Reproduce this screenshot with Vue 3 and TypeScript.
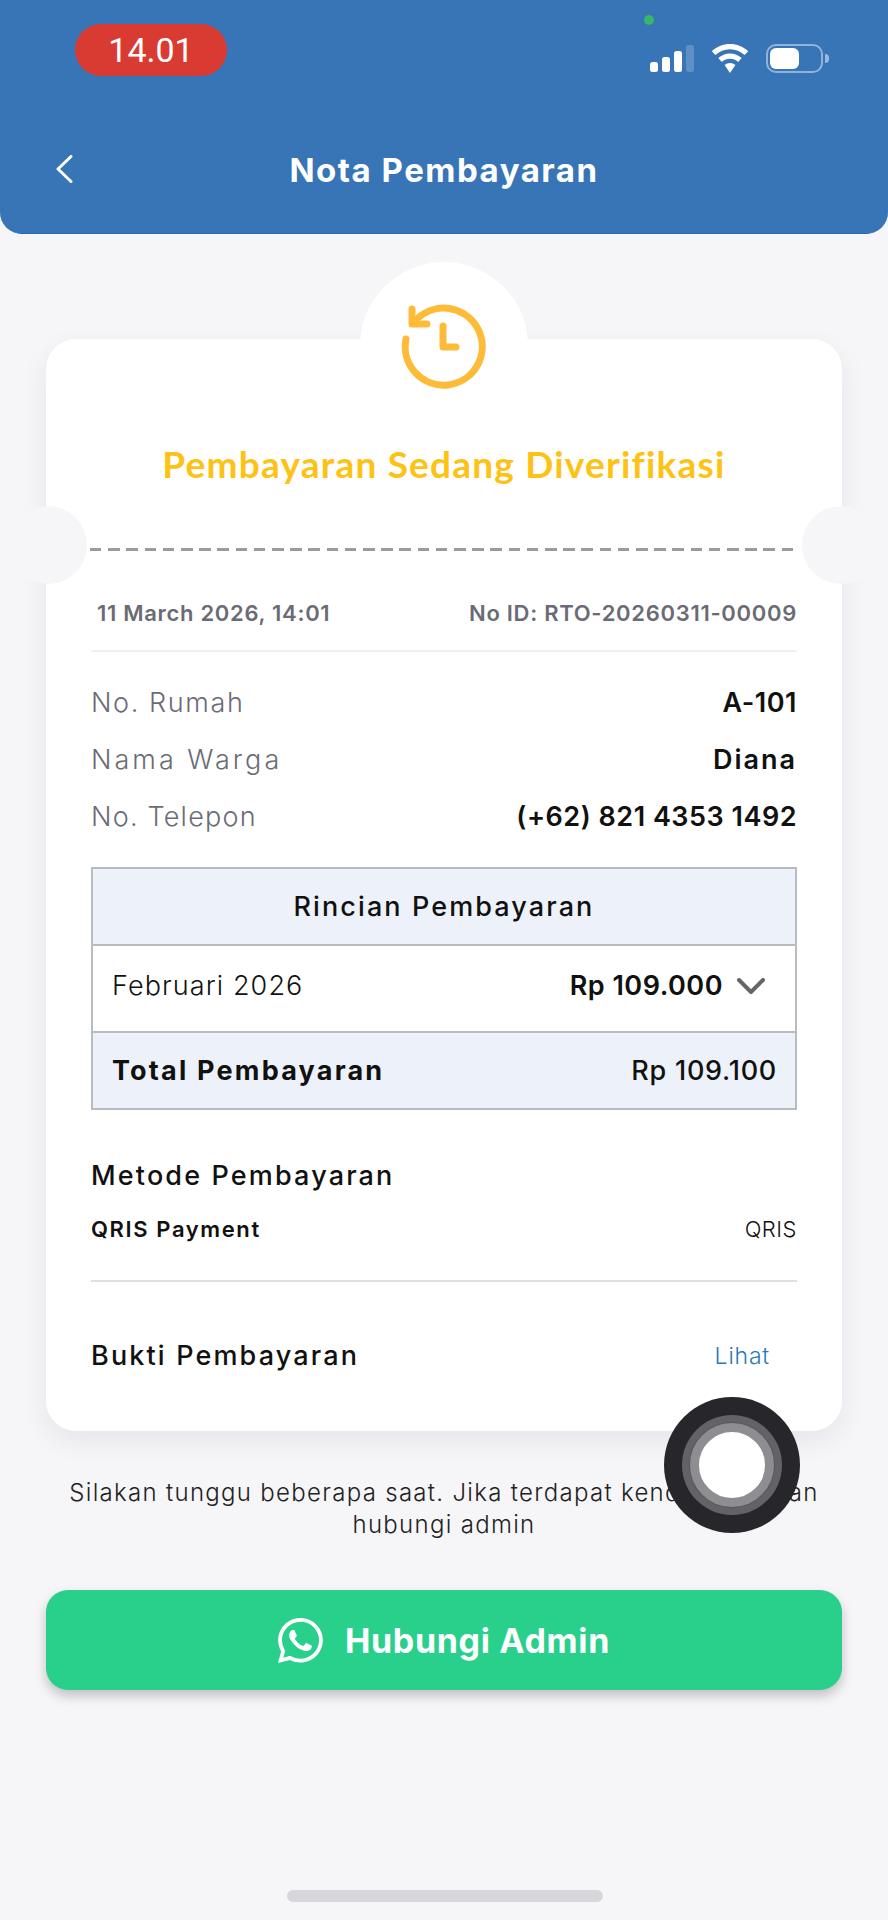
<script setup lang="ts">
interface InfoRow {
  label: string
  value: string
}

const infoRows: InfoRow[] = [
  { label: 'No. Rumah', value: 'A-101' },
  { label: 'Nama Warga', value: 'Diana' },
  { label: 'No. Telepon', value: '(+62) 821 4353 1492' },
]
</script>

<template>
  <div class="page">
    <header class="header">
      <div class="status-bar">
        <div class="time-pill">14.01</div>
        <div class="status-icons">
          <div class="signal">
            <span class="bar b1"></span>
            <span class="bar b2"></span>
            <span class="bar b3"></span>
            <span class="bar b4"></span>
          </div>
          <svg class="wifi" viewBox="0 0 38 29" width="38" height="29">
            <path d="M19 0C12 0 5.600 2.700 .8 7.200l3.600 3.900C8.200 7.500 13.300 5.300 19 5.300s10.800 2.200 14.600 5.800l3.600-3.900C32.400 2.700 26 0 19 0z" fill="#fff" />
            <path d="M19 9.500c-4.500 0-8.600 1.700-11.700 4.600l3.600 3.900c2.100-2 5-3.200 8.100-3.200s6 1.200 8.100 3.200l3.600-3.900C27.600 11.200 23.500 9.500 19 9.500z" fill="#fff" />
            <path d="M19 19c-2.100 0-4 .8-5.400 2.100L19 29l5.400-7.900C23 19.800 21.100 19 19 19z" fill="#fff" />
          </svg>
          <div class="battery">
            <span class="battery-fill"></span>
          </div>
          <span class="battery-tip"></span>
        </div>
        <span class="green-dot"></span>
      </div>
      <div class="nav-bar">
        <svg class="back" viewBox="0 0 18 28" width="18" height="28">
          <path d="M16 1.500 3 14l13 12.500" fill="none" stroke="#fff" stroke-width="3" stroke-linecap="round" stroke-linejoin="round" />
        </svg>
        <h1 class="nav-title">Nota Pembayaran</h1>
      </div>
    </header>

    <main class="content">
      <section class="card">
        <div class="bump"></div>
        <svg class="status-icon" viewBox="394 296 100 100" width="100" height="100">
          <g fill="none" stroke="#fdbb38" stroke-width="7" stroke-linecap="round" stroke-linejoin="round">
            <path d="M406 339A38.500 38.500 0 1 0 418 318" />
            <path d="M412 309v15h15" />
            <path d="M443 326v21h13" />
          </g>
        </svg>
        <h2 class="status-title">Pembayaran Sedang Diverifikasi</h2>

        <div class="tear">
          <span class="notch left"></span>
          <span class="dash"></span>
          <span class="notch right"></span>
        </div>

        <div class="meta">
          <span>11 March 2026, 14:01</span>
          <span>No ID: RTO-20260311-00009</span>
        </div>

        <div class="info">
          <div v-for="row in infoRows" :key="row.label" class="info-row">
            <span class="info-label">{{ row.label }}</span>
            <span class="info-value">{{ row.value }}</span>
          </div>
        </div>

        <div class="detail">
          <div class="detail-head">Rincian Pembayaran</div>
          <div class="detail-row">
            <span class="month">Februari 2026</span>
            <span class="amount">Rp 109.000</span>
            <svg class="chevron" viewBox="0 0 28 16" width="28" height="16">
              <path d="M2 2l12 12L26 2" fill="none" stroke="#666669" stroke-width="4" stroke-linecap="round" stroke-linejoin="round" />
            </svg>
          </div>
          <div class="detail-total">
            <span class="total-label">Total Pembayaran</span>
            <span class="total-value">Rp 109.100</span>
          </div>
        </div>

        <h3 class="method-title">Metode Pembayaran</h3>
        <div class="method-row">
          <span class="method-name">QRIS Payment</span>
          <span class="method-code">QRIS</span>
        </div>

        <div class="proof">
          <span class="proof-title">Bukti Pembayaran</span>
          <span class="proof-link">Lihat</span>
        </div>
      </section>

      <p class="notice">Silakan tunggu beberapa saat. Jika terdapat kendala, silakan hubungi admin</p>

      <button class="wa-button" type="button">
        <svg class="wa-icon" viewBox="0 0 16 16" width="45" height="45">
          <path fill="#fff" d="M13.601 2.326A7.854 7.854 0 0 0 7.994 0C3.627 0 .068 3.558.064 7.926c0 1.399.366 2.760 1.057 3.965L0 16l4.204-1.102a7.933 7.933 0 0 0 3.790.965h.004c4.368 0 7.926-3.558 7.930-7.930A7.898 7.898 0 0 0 13.600 2.326zM7.994 14.521a6.573 6.573 0 0 1-3.356-.920l-.240-.144-2.494.654.666-2.433-.156-.251a6.560 6.560 0 0 1-1.007-3.505c0-3.626 2.957-6.584 6.591-6.584a6.560 6.560 0 0 1 4.660 1.931 6.557 6.557 0 0 1 1.928 4.660c-.004 3.639-2.961 6.592-6.592 6.592zm3.615-4.934c-.197-.099-1.170-.578-1.353-.646-.182-.065-.315-.099-.445.099-.133.197-.513.646-.627.775-.114.133-.232.148-.430.050-.197-.100-.836-.308-1.592-.985-.590-.525-.985-1.175-1.103-1.372-.114-.198-.011-.304.088-.403.087-.088.197-.232.296-.346.100-.114.133-.198.198-.330.065-.134.034-.248-.015-.347-.050-.099-.445-1.076-.612-1.470-.160-.389-.323-.335-.445-.340-.114-.007-.247-.007-.380-.007a.729.729 0 0 0-.529.247c-.182.198-.691.677-.691 1.654 0 .977.710 1.916.810 2.049.098.133 1.394 2.132 3.383 2.992.470.205.840.326 1.129.418.475.152.904.129 1.246.080.380-.058 1.171-.480 1.338-.943.164-.464.164-.860.114-.943-.049-.084-.182-.133-.380-.232z" />
        </svg>
        <span>Hubungi Admin</span>
      </button>
    </main>

    <div class="home-indicator"></div>

    <div class="assistive">
      <div class="ring-outer">
        <div class="ring-mid">
          <div class="ring-core"></div>
        </div>
      </div>
    </div>
  </div>
</template>

<style>
html,
body {
  margin: 0;
  background: #f6f5f8;
}
</style>

<style scoped>
.page {
  position: relative;
  width: 888px;
  height: 1920px;
  overflow: hidden;
  background: #f6f5f8;
  font-family: Inter, 'Open Sans', sans-serif;
  color: #111;
  display: flex;
  flex-direction: column;
}

.header {
  height: 234px;
  box-sizing: border-box;
  background: #3775b6;
  border-radius: 0 0 22px 22px;
  border-bottom: 1px solid #1f6fb8;
  flex-shrink: 0;
}

.status-bar {
  position: relative;
  height: 130px;
  padding: 24px 59px 0 75px;
  box-sizing: border-box;
  display: flex;
  justify-content: space-between;
  align-items: flex-start;
}

.time-pill {
  width: 152px;
  height: 52px;
  border-radius: 26px;
  background: #d93b32;
  color: #fff;
  font-family: Roboto, sans-serif;
  font-size: 34px;
  line-height: 52px;
  text-align: center;
}

.status-icons {
  display: flex;
  align-items: center;
  height: 29px;
  margin-top: 20px;
}

.signal {
  display: flex;
  align-items: flex-end;
  gap: 4px;
  height: 27px;
  margin-right: 17px;
}

.bar {
  width: 8px;
  border-radius: 2.500px;
  background: #fff;
}

.b1 {
  height: 10px;
}

.b2 {
  height: 15px;
}

.b3 {
  height: 21px;
}

.b4 {
  height: 27px;
  background: rgba(255, 255, 255, 0.2);
}

.battery {
  width: 57px;
  height: 29px;
  box-sizing: border-box;
  margin-left: 17px;
  padding: 2px;
  border: 2px solid rgba(255, 255, 255, 0.45);
  border-radius: 10px;
}

.battery-fill {
  display: block;
  width: 29px;
  height: 100%;
  border-radius: 6px;
  background: #fff;
}

.battery-tip {
  width: 4px;
  height: 9px;
  margin-left: 2px;
  border-radius: 0 5px 5px 0;
  background: rgba(255, 255, 255, 0.5);
}

.green-dot {
  position: absolute;
  left: 644px;
  top: 15px;
  width: 10px;
  height: 10px;
  border-radius: 50%;
  background: #34b86a;
}

.nav-bar {
  position: relative;
  height: 80px;
  display: flex;
  align-items: center;
  justify-content: center;
}

.back {
  position: absolute;
  left: 55px;
  top: 25px;
}

.nav-title {
  margin: 0;
  color: #fff;
  font-size: 33px;
  font-weight: 700;
  letter-spacing: 1.500px;
}

.content {
  padding: 105px 46px 0;
  display: flex;
  flex-direction: column;
}

.card {
  position: relative;
  height: 1092px;
  box-sizing: border-box;
  padding: 0 45px;
  background: #fff;
  border-radius: 30px;
  box-shadow: 0 10px 28px rgba(20, 20, 40, 0.07);
  display: flex;
  flex-direction: column;
}

.bump {
  position: absolute;
  left: 314px;
  top: -77px;
  width: 168px;
  height: 168px;
  border-radius: 50%;
  background: #fff;
}

.status-icon {
  position: absolute;
  left: 348px;
  top: -43px;
}

.status-title {
  position: relative;
  margin: 100px 0 0;
  height: 50px;
  text-align: center;
  color: #fec214;
  font-family: Lato, sans-serif;
  font-size: 37px;
  font-weight: 700;
  line-height: 50px;
  letter-spacing: 1.200px;
}

.tear {
  position: relative;
  height: 3px;
  margin-top: 59px;
}

.dash {
  display: block;
  height: 3px;
  margin: 0 3px 0 -1px;
  background: repeating-linear-gradient(90deg, #9b9a9f 0 11.500px, transparent 11.500px 18.200px);
}

.notch {
  position: absolute;
  top: -42px;
  width: 78px;
  height: 78px;
  border-radius: 50%;
  background: #f6f5f8;
}

.notch.left {
  left: -82px;
}

.notch.right {
  right: -83px;
}

.meta {
  margin-top: 49px;
  padding: 0 0 24px 6px;
  display: flex;
  justify-content: space-between;
  color: #6b6b76;
  font-size: 22px;
  font-weight: 600;
  line-height: 26px;
  letter-spacing: 0.700px;
  border-bottom: 2px solid #f0f0f3;
}

.info {
  margin-top: 35px;
  display: flex;
  flex-direction: column;
  gap: 25px;
}

.info-row {
  display: flex;
  justify-content: space-between;
  font-size: 27px;
  line-height: 32px;
}

.info-label {
  color: #6b6b76;
  font-weight: 300;
  letter-spacing: 1.600px;
}

.info-row:nth-child(2) .info-label {
  letter-spacing: 3px;
}

.info-row:nth-child(3) .info-label {
  letter-spacing: 1.200px;
}

.info-value {
  font-weight: 600;
  letter-spacing: 0.500px;
}

.info-row:nth-child(2) .info-value {
  letter-spacing: 2px;
}

.detail {
  margin-top: 34px;
  border: 2px solid #b8bbc0;
  font-size: 27px;
}

.detail-head {
  height: 77px;
  box-sizing: border-box;
  border-bottom: 2px solid #b8bbc0;
  background: #edf2fa;
  text-align: center;
  line-height: 75px;
  font-weight: 500;
  letter-spacing: 2.100px;
}

.detail-row {
  height: 87px;
  box-sizing: border-box;
  padding: 0 30px 6px 19px;
  border-bottom: 2px solid #b8bbc0;
  display: flex;
  align-items: center;
}

.month {
  flex: 1;
  font-weight: 300;
  letter-spacing: 1.100px;
}

.amount {
  font-weight: 600;
  margin-right: 14px;
  letter-spacing: 0.500px;
}

.detail-total {
  height: 75px;
  box-sizing: border-box;
  padding: 0 18px 0 19px;
  background: #edf2fa;
  display: flex;
  justify-content: space-between;
  align-items: center;
}

.total-label {
  font-weight: 700;
  letter-spacing: 2.200px;
}

.total-value {
  font-weight: 500;
  letter-spacing: 0.750px;
}

.method-title {
  margin: 49px 0 0;
  font-size: 27px;
  font-weight: 500;
  line-height: 34px;
  letter-spacing: 2.150px;
}

.method-row {
  margin-top: 22px;
  padding-bottom: 37px;
  border-bottom: 2px solid #e0e0e4;
  display: flex;
  justify-content: space-between;
  align-items: center;
  font-size: 22px;
  line-height: 28px;
}

.method-name {
  font-weight: 600;
  letter-spacing: 1.600px;
}

.method-code {
  font-weight: 300;
  letter-spacing: 0.500px;
}

.proof {
  margin-top: 57px;
  padding-right: 27px;
  display: flex;
  justify-content: space-between;
  align-items: center;
  line-height: 34px;
}

.proof-title {
  font-size: 27px;
  font-weight: 500;
  letter-spacing: 2.150px;
}

.proof-link {
  font-size: 23px;
  font-weight: 300;
  letter-spacing: 0.800px;
  color: #2e77b8;
}

.notice {
  margin: 46px 0 0;
  text-align: center;
  color: #222;
  font-size: 24px;
  font-weight: 300;
  line-height: 32px;
  letter-spacing: 1.300px;
}

.wa-button {
  height: 100px;
  margin-top: 49px;
  border: 0;
  border-radius: 22px;
  background: #28d08c;
  box-shadow: 0 6px 12px rgba(0, 0, 0, 0.22);
  color: #fff;
  font-family: inherit;
  font-size: 34px;
  font-weight: 700;
  letter-spacing: 0.650px;
  display: flex;
  align-items: center;
  justify-content: center;
  gap: 22px;
}

.wa-icon {
  flex-shrink: 0;
}

.home-indicator {
  position: absolute;
  left: 287px;
  bottom: 18px;
  width: 316px;
  height: 12px;
  border-radius: 6px;
  background: #d7d6da;
}

.assistive {
  position: absolute;
  left: 664px;
  top: 1397px;
}

.ring-outer {
  width: 136px;
  height: 136px;
  border-radius: 50%;
  background: #27262b;
  display: flex;
  align-items: center;
  justify-content: center;
}

.ring-mid {
  width: 100px;
  height: 100px;
  border-radius: 50%;
  background: #636266;
  display: flex;
  align-items: center;
  justify-content: center;
}

.ring-core {
  width: 66px;
  height: 66px;
  border-radius: 50%;
  background: #fff;
  border: 9px solid #8e8d92;
  box-shadow: 0 0 0 1px #58575c;
}
</style>
